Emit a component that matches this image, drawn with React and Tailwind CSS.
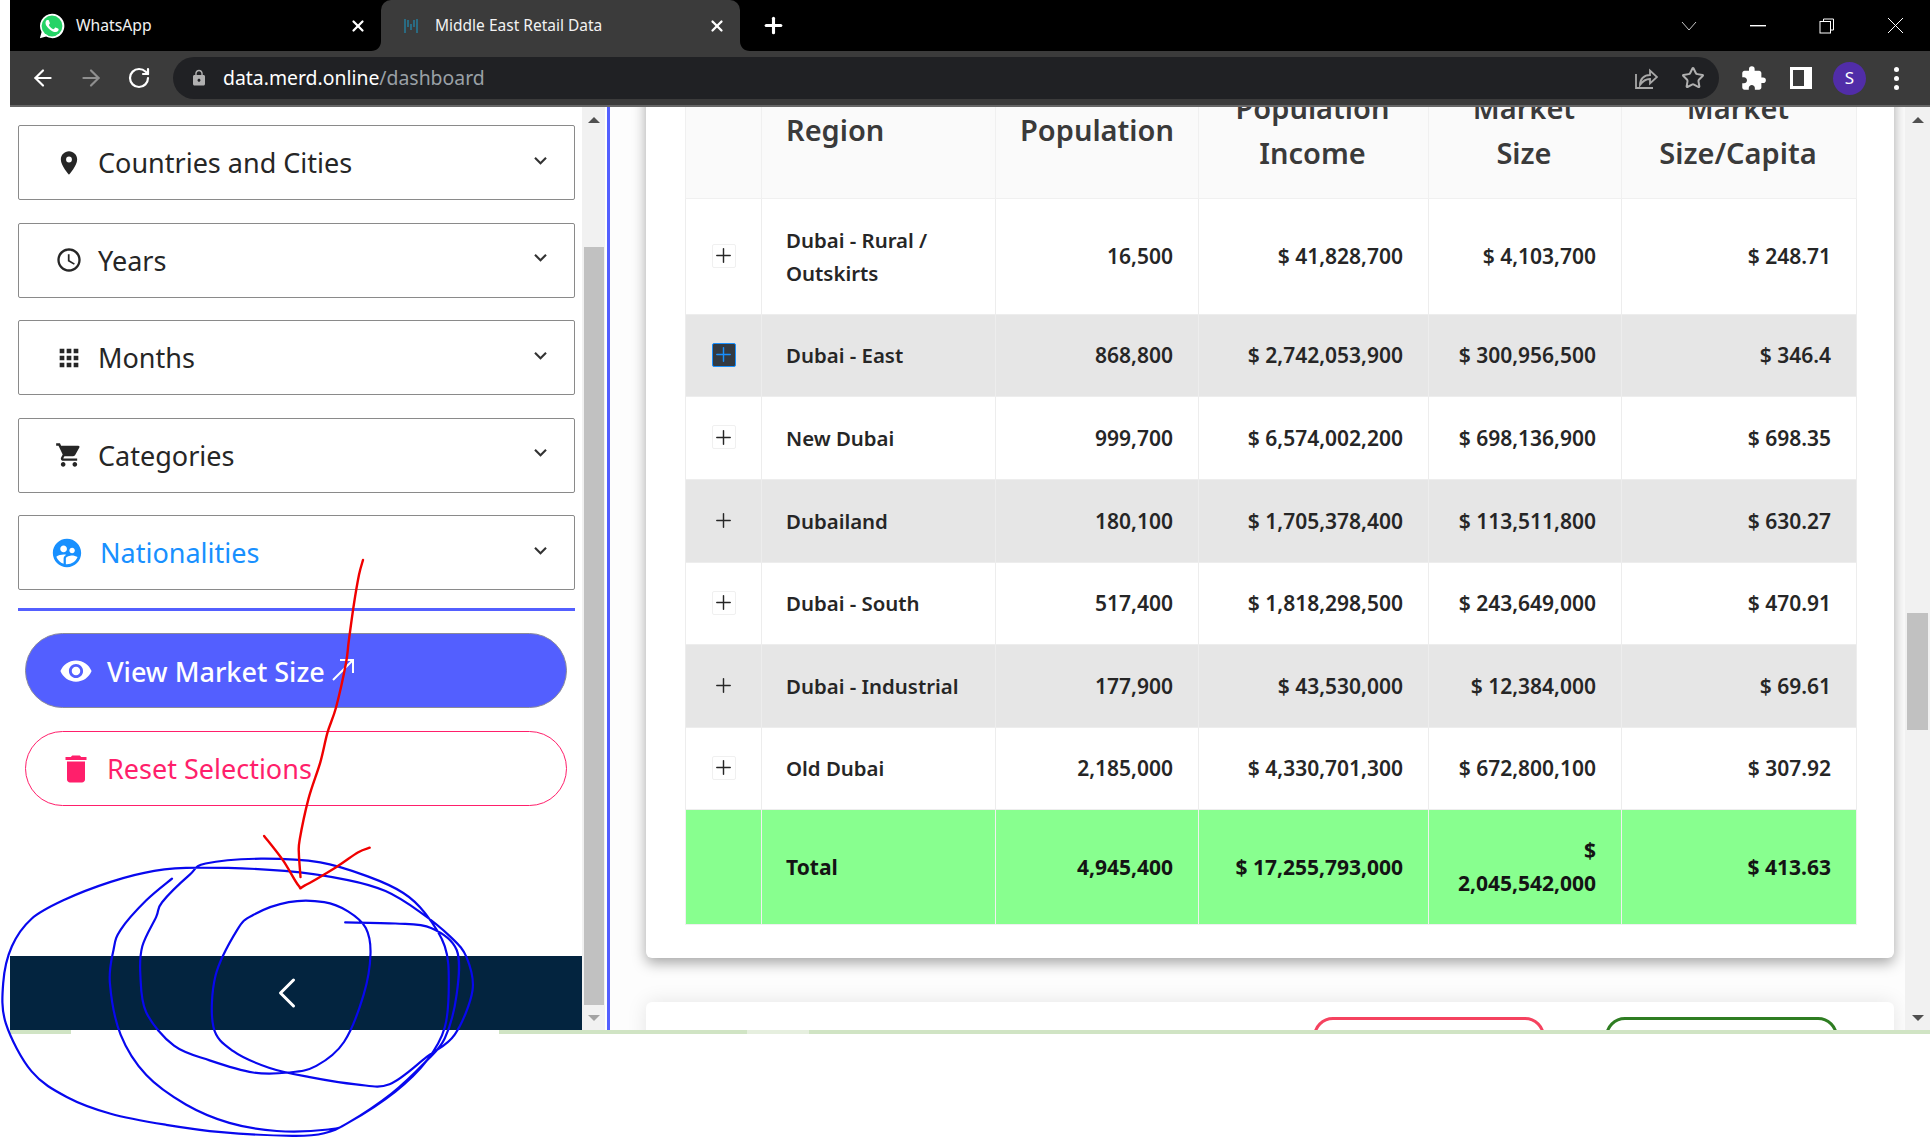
import React from "react";
import { MdLocationOn, MdAccessTime, MdApps, MdShoppingCart, MdSupervisedUserCircle, MdDelete, MdRemoveRedEye, MdExtension, MdKeyboardArrowDown, MdLock } from "react-icons/md";
import { ArrowLeft, ArrowRight, RotateCw, Star, X, Plus, ChevronLeft } from "lucide-react";

const bluePts = [[435,866],[370,925],[305,1005],[287,1060],[278,1150],[305,1290],[370,1400],[470,1480],[580,1530],[700,1552],[830,1548],[880,1530],[1000,1445],[1080,1360],[1125,1270],[1135,1150],[1125,1050],[1075,960],[1020,905],[930,860],[810,822],[660,812],[520,825],[480,855],[410,930],[395,970],[360,1050],[355,1130],[370,1230],[440,1320],[530,1360],[640,1393],[730,1393],[800,1375],[870,1310],[920,1180],[937,1070],[925,1000],[880,955],[820,930],[730,930],[640,965],[600,1005],[545,1130],[540,1270],[590,1335],[680,1380],[780,1405],[900,1425],[985,1425],[1080,1350],[1150,1290],[1195,1170],[1180,1080],[1140,1025],[1060,955],[975,900],[880,870],[720,845],[500,836],[390,845],[280,875],[160,925],[80,975],[30,1050],[8,1150],[15,1260],[80,1390],[170,1460],[280,1505],[420,1535],[560,1555],[740,1565],[820,1558],[880,1530],[990,1450],[1075,1365],[1125,1300],[1155,1180],[1155,1060],[1090,1000],[1000,988],[873,985]];
const redLine = [[918,0],[908,40],[895,120],[882,220],[875,280],[850,400],[828,470],[810,550],[780,650],[758,760],[756,800],[760,862]];
const redHead = [[668,750],[715,815],[755,885],[770,885],[850,835],[905,795],[935,782]];

function smooth(points) {
  const p = points.map(([x, y]) => [x / 2.529, 560 + y / 2.718]);
  let d = `M${p[0][0].toFixed(1)} ${p[0][1].toFixed(1)}`;
  for (let i = 0; i < p.length - 1; i++) {
    const a = p[i - 1] || p[i], b = p[i], c = p[i + 1], e = p[i + 2] || c;
    d += ` C${(b[0] + (c[0] - a[0]) / 6).toFixed(1)} ${(b[1] + (c[1] - a[1]) / 6).toFixed(1)} ${(c[0] - (e[0] - b[0]) / 6).toFixed(1)} ${(c[1] - (e[1] - b[1]) / 6).toFixed(1)} ${c[0].toFixed(1)} ${c[1].toFixed(1)}`;
  }
  return d;
}

const filters = [
  { label: "Countries and Cities", Icon: MdLocationOn },
  { label: "Years", Icon: MdAccessTime },
  { label: "Months", Icon: MdApps },
  { label: "Categories", Icon: MdShoppingCart },
  { label: "Nationalities", Icon: MdSupervisedUserCircle, active: true },
];

const rows = [
  { h: "h-[116px]", region: <>Dubai - Rural /<br />Outskirts</>, pop: "16,500", inc: "$ 41,828,700", size: "$ 4,103,700", cap: "$ 248.71" },
  { h: "h-[82px]", region: "Dubai - East", pop: "868,800", inc: "$ 2,742,053,900", size: "$ 300,956,500", cap: "$ 346.4", alt: true, focus: true },
  { h: "h-[83px]", region: "New Dubai", pop: "999,700", inc: "$ 6,574,002,200", size: "$ 698,136,900", cap: "$ 698.35" },
  { h: "h-[83px]", region: "Dubailand", pop: "180,100", inc: "$ 1,705,378,400", size: "$ 113,511,800", cap: "$ 630.27", alt: true },
  { h: "h-[82px]", region: "Dubai - South", pop: "517,400", inc: "$ 1,818,298,500", size: "$ 243,649,000", cap: "$ 470.91" },
  { h: "h-[83px]", region: "Dubai - Industrial", pop: "177,900", inc: "$ 43,530,000", size: "$ 12,384,000", cap: "$ 69.61", alt: true },
  { h: "h-[82px]", region: "Old Dubai", pop: "2,185,000", inc: "$ 4,330,701,300", size: "$ 672,800,100", cap: "$ 307.92" },
];

function Tri({ down, className }) {
  return (
    <svg width="14" height="8" viewBox="0 0 14 8" className={className}>
      <polygon points={down ? "1,1 13,1 7,7" : "1,7 13,7 7,1"} fill="currentColor" />
    </svg>
  );
}

function Chrome() {
  return (
    <div className="ml-[10px] flex flex-col text-white">
      <div className="flex h-[51px] bg-black">
        <div className="flex w-[371px] items-center">
          <svg width="26" height="26" viewBox="0 0 24 24" className="ml-[29px]">
            <path d="M12 .8A11.2 11.2 0 0 0 2.4 17.6L.8 23.2l5.8-1.5A11.2 11.2 0 1 0 12 .8z" fill="#fff" />
            <circle cx="12" cy="12" r="9.6" fill="#25d366" />
            <path d="M17.47 14.38c-.3-.15-1.76-.87-2.03-.97-.27-.1-.47-.15-.67.15-.2.3-.77.97-.94 1.17-.17.2-.35.22-.64.07-.3-.15-1.26-.46-2.39-1.48-.88-.79-1.48-1.76-1.65-2.06-.17-.3-.02-.46.13-.6.13-.13.3-.35.45-.52.15-.17.2-.3.3-.5.1-.2.05-.37-.02-.52-.08-.15-.67-1.61-.92-2.21-.24-.58-.49-.5-.67-.51h-.57c-.2 0-.52.07-.79.37-.27.3-1.04 1.02-1.04 2.48s1.07 2.88 1.21 3.07c.15.2 2.1 3.2 5.08 4.49.71.3 1.26.49 1.69.62.71.23 1.36.2 1.87.12.57-.09 1.76-.72 2.01-1.41.25-.7.25-1.29.17-1.41-.07-.12-.27-.2-.57-.35z" fill="#fff" />
          </svg>
          <span className="ml-[11px] text-[15.7px] text-[#f2f2f2]">WhatsApp</span>
          <X size={18} strokeWidth={3} className="ml-auto mr-[14px]" />
        </div>
        <div className="relative flex w-[359px] items-center rounded-t-[10px] bg-[#3b3b3b]">
          <svg width="10" height="10" viewBox="0 0 10 10" className="absolute -left-[10px] bottom-0"><path d="M10 0C10 6 6 10 0 10H10z" fill="#3b3b3b" /></svg>
          <svg width="10" height="10" viewBox="0 0 10 10" className="absolute -right-[10px] bottom-0"><path d="M0 0C0 6 4 10 10 10H0z" fill="#3b3b3b" /></svg>
          <svg width="16" height="16" viewBox="0 0 16 16" className="ml-[22px]">
            <path d="M1 15V1h2v14zM4 9V2h2v7zM7 12V6h2v6zM10 9V2h2v7zM13 15V1h2v14z" fill="#2a6b82" />
          </svg>
          <span className="ml-[16px] text-[15.5px] text-[#f2f2f2]">Middle East Retail Data</span>
          <X size={18} strokeWidth={3} className="ml-auto mr-[14px]" />
        </div>
        <div className="flex w-[67px] items-center justify-center">
          <Plus size={25} strokeWidth={3} />
        </div>
        <div className="ml-auto flex">
          <div className="flex w-[69px] items-center justify-center">
            <svg width="16" height="10" viewBox="0 0 16 10" fill="none" stroke="#c8c8c8"><path d="M1 1l7 8 7-8" /></svg>
          </div>
          <div className="flex w-[69px] items-center justify-center">
            <svg width="16" height="2" viewBox="0 0 16 2"><rect width="16" height="1.4" fill="#fff" /></svg>
          </div>
          <div className="flex w-[69px] items-center justify-center">
            <svg width="16" height="16" viewBox="0 0 16 16" fill="none" stroke="#fff"><path d="M4.5 3V1h10v11h-3" /><rect x="1" y="3.500" width="10.500" height="11.500" /></svg>
          </div>
          <div className="flex w-[69px] items-center justify-center">
            <svg width="17" height="17" viewBox="0 0 17 17" fill="none" stroke="#fff"><path d="M1 1l15 15M16 1L1 16" /></svg>
          </div>
        </div>
      </div>
      <div className="flex h-[54px] items-center bg-[#3b3b3b]">
        <div className="flex w-[163px] items-center">
          <ArrowLeft size={26} strokeWidth={2} className="ml-[20px]" />
          <ArrowRight size={26} strokeWidth={2} className="ml-[22px] text-[#8f8f8f]" />
          <RotateCw size={24} strokeWidth={2.2} className="ml-[23px]" />
        </div>
        <div className="flex h-[42px] w-[1546px] items-center rounded-full bg-[#202124]">
          <MdLock size={18} className="ml-[17px] text-[#b0b0b0]" />
          <span className="ml-[15px] text-[19.4px] text-white">data.merd.online<span className="text-[#9aa0a6]">/dashboard</span></span>
          <svg width="24" height="24" viewBox="0 0 24 24" fill="none" stroke="#a8a8a8" strokeWidth="1.8" className="ml-auto mr-[23px]">
            <path d="M2 8v14h17" />
            <path d="M6 19c0-6 4-10 10-10V4.500l7 6.500-7 6.500V13c-4 0-7 1.500-10 6z" />
          </svg>
          <Star size={24} strokeWidth={2} className="mr-[14px] text-[#b0b0b0]" />
        </div>
        <MdExtension size={27} className="ml-[21px] text-white" />
        <div className="ml-[23px] flex h-[22px] w-[22px] justify-start border-[3px] border-white bg-white">
          <div className="h-full w-[11px] bg-[#3b3b3b]" />
        </div>
        <div className="ml-[21px] flex h-[33px] w-[33px] items-center justify-center rounded-full bg-[#512da8] text-[17px]">S</div>
        <div className="ml-[28px] flex flex-col gap-[4px]">
          <span className="h-[5px] w-[5px] rounded-full bg-white" />
          <span className="h-[5px] w-[5px] rounded-full bg-white" />
          <span className="h-[5px] w-[5px] rounded-full bg-white" />
        </div>
      </div>
      <div className="h-[2px] bg-[#666666]" />
    </div>
  );
}

function Filter({ label, Icon, active }) {
  return (
    <div className={`flex h-[75px] items-center rounded-[2px] border border-[#8a8a8a] bg-white ${active ? "text-[#1890ff]" : "text-[#262626]"}`}>
      <span className={`flex w-[79px] justify-center ${active ? "pl-[20px]" : "pl-[24px]"} pr-[3px]`}>
        <Icon size={active ? 34 : 28} />
      </span>
      <span className={`text-[27px] leading-none ${active ? "ml-[2px]" : ""}`}>{label}</span>
      <MdKeyboardArrowDown size={25} className="ml-auto mb-[5px] mr-[21px] text-[#333333]" />
    </div>
  );
}

function Sidebar() {
  return (
    <div className="flex w-[572px] flex-col bg-white">
      <div className="flex flex-1 flex-col pl-[8px] pr-[7px] pt-[18px]">
        <div className="flex flex-col gap-[22.5px]">
          {filters.map((f) => <Filter key={f.label} {...f} />)}
        </div>
        <div className="mt-[18px] h-[3px] bg-[#535fff]" />
        <div className="ml-[7px] mr-[8px] mt-[22px] flex h-[75px] items-center rounded-full border border-[#8a8a9a] bg-[#535fff] pt-[1px] text-white">
          <MdRemoveRedEye size={34} className="ml-[33px]" />
          <span className="ml-[14px] text-[27px] font-medium leading-none">View Market Size</span>
          <svg width="22" height="22" viewBox="0 0 22 22" fill="none" stroke="#fff" strokeWidth="2" className="ml-[7px] -mt-[2px]">
            <path d="M1 21L20 2M8 1h13v13" />
          </svg>
        </div>
        <div className="ml-[7px] mr-[8px] mt-[23px] flex h-[75px] items-center rounded-full border border-[#ff1f6b] bg-white text-[#ff1f6b]">
          <MdDelete size={36} className="ml-[32px]" />
          <span className="ml-[13px] text-[27px] leading-none">Reset Selections</span>
        </div>
      </div>
      <div className="flex h-[74px] items-center justify-center bg-[#03243f] text-white">
        <ChevronLeft size={52} strokeWidth={1.4} className="mr-[18px]" />
      </div>
    </div>
  );
}

function Scrollbar({ width, pad, thumb, bottomColor }) {
  return (
    <div className={`flex flex-col bg-[#f1f1f1] ${width} ${pad}`}>
      <div className="flex h-[26px] shrink-0 items-center justify-center text-[#505050]"><Tri /></div>
      <div className={`${thumb} bg-[#c1c1c1]`} />
      <div className={`mt-auto flex h-[25px] shrink-0 items-center justify-center ${bottomColor}`}><Tri down /></div>
    </div>
  );
}

const th = "border border-[#f0f0f0] bg-[#fafafa] pb-[3px] pl-[24px] pr-[26px] text-[29px] font-semibold leading-[45px] text-[#3a3a3a]";
const td = "border border-[#ededed] px-[25px] text-[21px] font-semibold leading-[33px] text-[#262626]";
const regionTd = "border border-[#ededed] pl-[24px] pr-[25px] text-[20.4px] font-semibold leading-[33px] text-[#262626] text-left";
const tot = "border border-[#f0f0f0] px-[25px] text-[21px] font-bold leading-[33px] text-[#141414]";

function DataTable() {
  return (
    <table className="w-[1171px] table-fixed border-collapse">
      <colgroup>
        <col className="w-[76px]" />
        <col className="w-[234px]" />
        <col className="w-[203px]" />
        <col className="w-[230px]" />
        <col className="w-[193px]" />
        <col className="w-[235px]" />
      </colgroup>
      <thead>
        <tr className="h-[135px]">
          <th className={th} />
          <th className={`${th} text-left`}>Region</th>
          <th className={`${th} text-right`}>Population</th>
          <th className={`${th} text-center`}>Population Income</th>
          <th className={`${th} text-center`}>Market Size</th>
          <th className={`${th} text-center`}>Market Size/Capita</th>
        </tr>
      </thead>
      <tbody>
        {rows.map((r) => (
          <tr key={r.pop} className={`${r.h} ${r.alt ? "bg-[#e6e6e6]" : "bg-white"}`}>
            <td className="border border-[#ededed]">
              <div className="mb-[2px] flex justify-center">
                <div className={`flex h-[24px] w-[24px] items-center justify-center rounded-[2px] border ${r.focus ? "border-[#1890ff] bg-[#333a42] text-[#1890ff]" : r.alt ? "border-transparent text-[#262626]" : "border-[#f0f0f0] bg-white text-[#262626]"}`}>
                  <Plus size={23} strokeWidth={1.5} className="shrink-0" />
                </div>
              </div>
            </td>
            <td className={regionTd}>{r.region}</td>
            <td className={`${td} text-right`}>{r.pop}</td>
            <td className={`${td} text-right`}>{r.inc}</td>
            <td className={`${td} text-right`}>{r.size}</td>
            <td className={`${td} text-right`}>{r.cap}</td>
          </tr>
        ))}
        <tr className="h-[115px] bg-[#88ff8f]">
          <td className="border border-[#f0f0f0]" />
          <td className={`${tot} !pl-[24px] text-left`}>Total</td>
          <td className={`${tot} text-right`}>4,945,400</td>
          <td className={`${tot} text-right`}>$ 17,255,793,000</td>
          <td className={`${tot} text-right`}>$<br />2,045,542,000</td>
          <td className={`${tot} text-right`}>$ 413.63</td>
        </tr>
      </tbody>
    </table>
  );
}

function Main() {
  return (
    <div className="h-full w-[1295px] overflow-hidden bg-[#fdfdfd]">
      <div className="ml-[36px] mr-[11px] -mt-[44px] rounded-[6px] bg-white pb-[33px] pl-[39px] shadow-[0_5px_14px_rgba(0,0,0,0.35)]">
        <DataTable />
      </div>
      <div className="ml-[36px] mr-[11px] mt-[44px] flex h-[120px] justify-end gap-[60px] rounded-[6px] bg-white pr-[56px] pt-[15px] shadow-[0_0_20px_rgba(0,0,0,0.1)]">
        <div className="h-[60px] w-[232px] rounded-[20px] border-[3px] border-[#f5425f]" />
        <div className="h-[60px] w-[233px] rounded-[20px] border-[3px] border-[#2e7d22]" />
      </div>
    </div>
  );
}

export default function App() {
  return (
    <div className="relative h-[1137px] w-[1930px] overflow-hidden bg-white font-['Noto_Sans',sans-serif]">
      <Chrome />
      <div className="ml-[10px] flex h-[923px]">
        <Sidebar />
        <Scrollbar width="w-[23px]" pad="px-[1.5px]" thumb="mt-[114px] h-[758px]" bottomColor="text-[#a3a3a3]" />
        <div className="w-[2px] bg-white" />
        <div className="w-[3px] bg-[#535fff]" />
        <Main />
        <Scrollbar width="w-[25px]" pad="px-[2px]" thumb="mt-[480px] h-[117px]" bottomColor="text-[#505050]" />
      </div>
      <div className="ml-[10px] flex h-[4px]">
        <div className="w-[61px] bg-[#d0e4c4]" />
        <div className="w-[428px] bg-white" />
        <div className="w-[248px] bg-[#d0e4c4]" />
        <div className="w-[62px] bg-[#e6efdf]" />
        <div className="flex-1 bg-[#d0e4c4]" />
      </div>
      <svg width="1930" height="1137" viewBox="0 0 1930 1137" fill="none" className="pointer-events-none absolute left-0 top-0">
        <path d={smooth(bluePts)} stroke="#0808ee" strokeWidth="2.2" strokeLinecap="round" strokeLinejoin="round" />
        <path d={smooth(redLine)} stroke="#f00000" strokeWidth="2.4" strokeLinecap="round" />
        <path d={smooth(redHead)} stroke="#f00000" strokeWidth="2.4" strokeLinecap="round" />
      </svg>
    </div>
  );
}
